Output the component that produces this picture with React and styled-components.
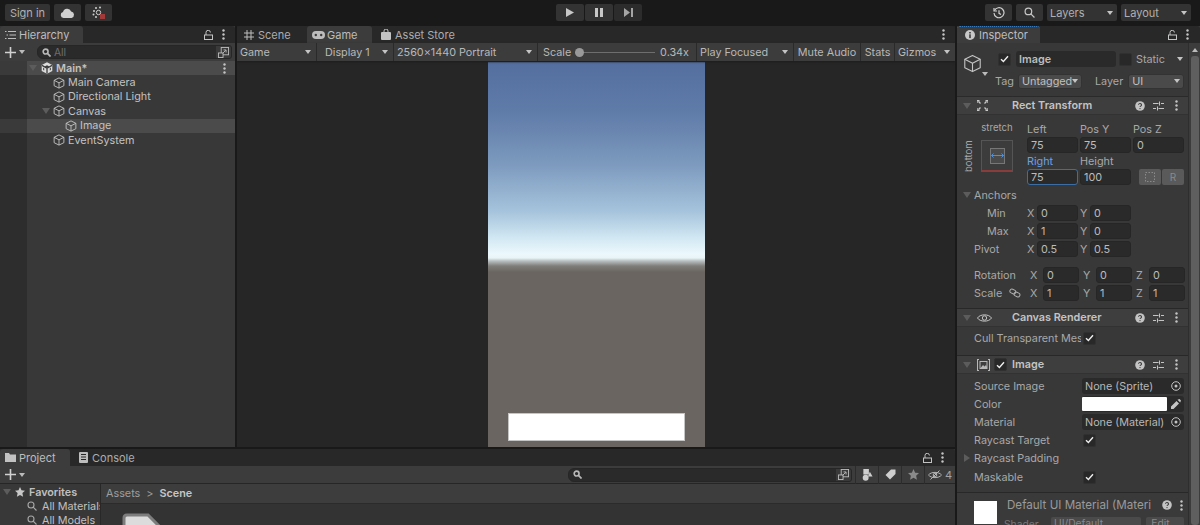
import React from 'react';
import styled, { createGlobalStyle } from 'styled-components';

const Global = createGlobalStyle`
  html, body { margin: 0; padding: 0; background: #191919; }
  body { font-family: Inter, "Noto Sans", "Liberation Sans", sans-serif; font-size: 10.8px; color: #c4c4c4; }
  * { box-sizing: border-box; }
`;

const Page = styled.div`width: 1200px; height: 525px; overflow: hidden; display: flex; flex-direction: column; background: #191919;`;
const TopBar = styled.div`height: 26px; flex: none; display: grid; grid-template-columns: 1fr auto 1fr; align-items: start; padding: 4px 9px 0 5px;`;
const TopGroup = styled.div`display: flex; gap: ${p => p.$gap ?? 4}px; margin-left: ${p => p.$ml ?? 0}px; justify-content: ${p => p.$end ? 'flex-end' : 'flex-start'};`;
const TopButton = styled.div`height: 17px; width: ${p => p.$w}px; background: ${p => p.$dim ? '#2c2c2c' : '#333'}; border-radius: 2px; display: flex; align-items: center; justify-content: center; color: #b0b0b0; font-size: 11px;`;
const TopSelect = styled(TopButton)`justify-content: space-between; padding: 0 4px 0 3px; width: 70px;`;
const Work = styled.div`flex: 1; min-height: 0; display: flex; gap: 2px;`;
const LeftCol = styled.div`width: 955px; flex: none; display: flex; flex-direction: column;`;
const TopPanels = styled.div`height: 421px; flex: none; display: flex; gap: 2px;`;

const Panel = styled.div`display: flex; flex-direction: column; width: ${p => p.$w ? p.$w + 'px' : 'auto'}; flex: ${p => p.$w ? 'none' : 1}; min-width: 0; min-height: 0; overflow: hidden; background: ${p => p.$bg || '#383838'};`;
const TabStrip = styled.div`height: 17px; flex: none; background: #282828; display: flex; align-items: center; border-radius: 3px 3px 0 0;`;
const Tab = styled.div`height: 17px; width: ${p => p.$w}px; flex: none; display: flex; align-items: center; white-space: nowrap; gap: ${p => p.$gap ?? 4}px; padding-left: ${p => p.$pl ?? 5}px; color: ${p => p.$active ? '#bdbdbd' : '#adadad'}; background: ${p => p.$active ? '#3c3c3c' : 'transparent'}; border-radius: 3px 3px 0 0; border-top: ${p => p.$blue ? '1px dotted #3a79bb' : 'none'}; font-size: 11px;`;
const TabTools = styled.div`margin-left: auto; display: flex; align-items: center; gap: ${p => p.$gap ?? 9}px; padding-right: ${p => p.$pr ?? 10}px;`;

const Toolbar = styled.div`height: ${p => p.$h ?? 18}px; flex: none; background: #3c3c3c; display: flex; align-items: center; box-shadow: 0 1px 0 #232323;`;
const AddBox = styled.div`width: 37px; flex: none; display: flex; align-items: center; padding-left: 5px; gap: 3px;`;
const SearchBox = styled.div`height: 14px; width: ${p => p.$w}px; margin-left: ${p => p.$ml ?? 0}px; flex: none; background: #2a2a2a; border-radius: 6px 3px 3px 6px; display: flex; align-items: center; padding-left: 4px; gap: 3px; color: #6e6e6e; font-size: 10.3px; border: 1px solid #262626;`;
const ExpandCell = styled.div`margin-left: auto; width: 15px; height: 12px; flex: none; background: #3a3a3a; border-radius: 0 2px 2px 0; display: flex; align-items: center; justify-content: center;`;

const TreeArea = styled.div`flex: 1; display: flex; flex-direction: column; padding-top: 0; background: linear-gradient(90deg, #2d2d2d 27px, #383838 27px);`;
const TreeRow = styled.div`height: 14.4px; padding-left: ${p => p.$indent}px; display: flex; align-items: center; gap: 3px; background: ${p => p.$bg || 'transparent'}; color: #c2c2c2; font-weight: ${p => p.$bold ? 600 : 400}; font-size: 10.8px;`;
const Spacer = styled.div`margin-left: auto; display: flex; align-items: center; padding-right: ${p => p.$pr ?? 9}px;`;
const TreeArrow = styled.div`width: 0; height: 0; border-left: 4px solid transparent; border-right: 4px solid transparent; border-top: 6px solid #5c5c5c; margin-right: 0;`;

const GameBar = styled(Toolbar)`gap: 0; z-index: 1; box-shadow: 0 1px 2px #1c1c1c;`;
const Seg = styled.div`width: ${p => p.$w}px; flex: none; height: 18px; display: flex; align-items: center; justify-content: ${p => p.$center ? 'center' : 'space-between'}; padding: 0 ${p => p.$pr ?? 5}px 0 ${p => p.$pl ?? 3}px; border-right: ${p => p.$last ? 'none' : '1px solid #2a2a2a'}; color: #b8b8b8; font-size: 10.8px; white-space: nowrap;`;
const Caret = styled.span`display: inline-block; flex: none; width: 0; height: 0; margin-top: ${p => p.$mt ?? 0}px; margin-left: ${p => p.$ml ?? 0}px; border-left: 3.5px solid transparent; border-right: 3.5px solid transparent; border-top: 4px solid ${p => p.$c || '#c4c4c4'};`;
const UpCaret = styled.span`display: block; flex: none; width: 0; height: 0; border-left: 3.5px solid transparent; border-right: 3.5px solid transparent; border-bottom: 4px solid #bbb;`;
const SliderTrack = styled.div`flex: 1; height: 1px; background: #6e6e6e; margin: 0 5px 0 4px; display: flex; align-items: center;`;
const SliderKnob = styled.div`width: 9px; height: 9px; border-radius: 50%; background: #999;`;

const GameView = styled.div`flex: 1; background: #262626; display: flex; justify-content: center; padding-top: 1px;`;
const Viewport = styled.div`width: 217px; height: 385px; padding: 351px 20px 6px; background: linear-gradient(180deg, #546f9f 0px, #5f7ba8 50px, #7b98bd 100px, #a6c4dc 150px, #d5eaf4 178px, #ecf8fc 192px, #e8f4f7 196px, #b8c0c0 199px, #7f7d7a 204px, #6a6560 210px, #6a6560 385px);`;
const WhiteRect = styled.div`height: 28px; background: #fff; border: 1px solid #c5c5c5; width: 177px;`;

const Bottom = styled.div`flex: 1; margin-top: 2px; display: flex; flex-direction: column; min-height: 0; background: #333;`;
const BottomTools = styled(Toolbar)`box-shadow: none; border-bottom: 1px solid #262626; justify-content: flex-start;`;
const ToolBtn = styled.div`width: ${p => p.$w ?? 23}px; flex: none; height: 18px; border-left: 1px solid #2c2c2c; display: flex; align-items: center; justify-content: center; gap: 3px; color: #a5a5a5; font-size: 11px;`;
const BottomBody = styled.div`flex: 1; display: flex; min-height: 0;`;
const FavPane = styled.div`width: 101px; flex: none; background: #383838; border-right: 1px solid #282828; padding-top: 1px; overflow: hidden;`;
const FavRow = styled.div`height: 14px; display: flex; align-items: center; gap: ${p => p.$gap ?? 5}px; padding-left: ${p => p.$pl}px; white-space: nowrap; font-weight: ${p => p.$bold ? 600 : 400}; color: #c0c0c0; font-size: 10.8px;`;
const FilesPane = styled.div`flex: 1; display: flex; flex-direction: column; min-width: 0;`;
const Crumbs = styled.div`height: 20px; flex: none; background: #3d3d3d; border-bottom: 1px solid #2b2b2b; display: flex; align-items: center; padding-left: 5px; gap: 6px; color: #9e9e9e; font-size: 10.8px;`;
const CrumbNow = styled.span`color: #c6c6c6; font-weight: 600;`;
const FileGrid = styled.div`padding: 9px 0 0 20px; overflow: hidden; flex: 1;`;

const Inspector = styled.div`flex: 1; display: flex; flex-direction: column; min-width: 0; background: #383838;`;
const InspBody = styled.div`flex: 1; display: flex; min-height: 0;`;
const InspMain = styled.div`width: 231px; flex: none; min-width: 0; display: flex; flex-direction: column; overflow: hidden;`;
const Scrollbar = styled.div`flex: 1; background: #3c3c3c; border-left: 1px solid #2e2e2e; display: flex; flex-direction: column; align-items: center; padding-top: 5px;`;
const ScrollThumb = styled.div`width: 8px; flex: 1; margin-top: 4px; border-radius: 3px; background: #5f5f5f;`;
const ObjHead = styled.div`height: 54px; flex: none; display: flex; border-bottom: 1px solid #2a2a2a; padding: 8px 0 0 6px;`;
const ObjIcon = styled.div`width: 32px; flex: none; display: flex; align-items: flex-start; padding-top: 3px;`;
const ObjFields = styled.div`flex: 1; display: flex; flex-direction: column; gap: 6px;`;
const ObjLine = styled.div`display: flex; align-items: center; height: 16px; font-size: 10.8px; color: #a8a8a8;`;
const CheckBox = styled.div`width: 13px; height: 13px; flex: none; background: #282828; border: 1px solid #303030; border-radius: 2px; display: flex; align-items: center; justify-content: center; margin: ${p => p.$m || 0};`;
const NameField = styled.div`width: 100px; height: 16px; margin-left: 5px; background: #2a2a2a; border-radius: 3px; padding-left: 3px; display: flex; align-items: center; color: #bdbdbd; font-weight: 600; font-size: 10.8px;`;
const Drop = styled.div`width: ${p => p.$w}px; height: 15px; margin-left: ${p => p.$ml}px; border-radius: 3px; background: #4a4a4a; border: 1px solid #333; display: flex; align-items: center; justify-content: space-between; padding: 0 3px; color: #c0c0c0; font-size: 10.8px;`;
const Txt = styled.span`margin-left: ${p => p.$ml ?? 0}px; width: ${p => p.$w ? p.$w + 'px' : 'auto'}; flex: none; overflow: ${p => p.$clip ? 'hidden' : 'visible'};`;

const CompHead = styled.div`height: 18px; flex: none; background: #3e3e3e; display: flex; align-items: center; padding-left: 6px; font-weight: 600; color: #c4c4c4; font-size: 10.8px; border-bottom: 1px solid #323232;`;
const CompTitle = styled.div`margin-left: ${p => p.$ml}px; flex: 1;`;
const CompTools = styled.div`display: flex; align-items: center; gap: 8px; padding-right: 10px;`;
const KebabGap = styled.div`margin-left: 3px;`;
const CompBody = styled.div`height: ${p => p.$h}px; flex: none; border-bottom: 1px solid #282828; padding-left: 17px; overflow: hidden;`;

const RectBlock = styled.div`display: flex; margin-left: -12px; height: 72px;`;
const AnchorWidget = styled.div`width: 65px; flex: none; display: grid; grid-template-columns: 19px 32px; grid-template-rows: 19px 32px; padding-top: 6px; font-size: 9.6px; color: #a8a8a8;`;
const AnchorTop = styled.div`grid-column: 2; grid-row: 1; text-align: center; line-height: 14px;`;
const AnchorSide = styled.div`grid-column: 1; grid-row: 2; writing-mode: vertical-rl; transform: rotate(180deg); text-align: center; justify-self: start; padding-right: 1px;`;
const AnchorBox = styled.div`grid-column: 2; grid-row: 2; background: #3c3c3c; border: 1px solid #555; border-bottom: 2px solid #8a3b3b; display: flex; align-items: center; justify-content: center;`;
const AnchorInner = styled.div`width: 15px; height: 16px; background: #4a4a4a; border: 1px solid #777; display: flex; align-items: center; justify-content: center;`;
const RectGrid = styled.div`display: grid; grid-template-columns: 53px 53px 51px; grid-template-rows: 15px 17px 15px 18px; width: 157px; padding-top: 7px; font-size: 10.8px; color: #a8a8a8;`;
const RectLabel = styled.div`display: flex; align-items: center; color: ${p => p.$blue ? '#6f9fe0' : 'inherit'}; line-height: 14px;`;
const Field = styled.div`height: 16px; width: ${p => p.$w ?? 51}px; background: #2a2a2a; border: 1px solid ${p => p.$focus ? '#3a6ea5' : '#262626'}; border-radius: 3px; padding-left: 3px; display: flex; align-items: center; color: #bcbcbc; font-size: 10.8px; flex: none;`;
const MiniBtns = styled.div`display: flex; gap: 1px; padding-left: 6px; height: 16px;`;
const MiniBtn = styled.div`width: 22px; height: 16px; background: #5a5a5a; border-radius: 2px; display: flex; align-items: center; justify-content: center; color: #8a8a8a; font-size: 10px;`;
const PropRow = styled.div`height: ${p => p.$h ?? 18}px; margin-top: ${p => p.$mt ?? 0}px; margin-left: ${p => p.$ml ?? 0}px; display: flex; align-items: center; color: #a8a8a8; font-size: 10.8px; white-space: nowrap; flex: none;`;
const AxisCell = styled.div`display: flex; align-items: center; width: ${p => p.$w}px; flex: none;`;
const AxisName = styled.span`width: ${p => p.$w}px; padding-left: ${p => p.$pl ?? 0}px; flex: none;`;
const SideArrow = styled.span`display: inline-block; width: 0; height: 0; margin-right: 4px; border-top: 4px solid transparent; border-bottom: 4px solid transparent; border-left: 6px solid #5c5c5c;`;
const DownArrow = styled.span`display: inline-block; flex: none; width: 0; height: 0; margin-right: ${p => p.$mr ?? 3}px; border-left: 4px solid transparent; border-right: 4px solid transparent; border-top: 6px solid #5c5c5c;`;
const ObjRef = styled.div`width: 102px; height: 16px; background: #2a2a2a; border-radius: 3px; display: flex; align-items: center; justify-content: space-between; padding: 0 3px; color: #b8b8b8; font-size: 10.8px;`;
const ColorField = styled.div`width: 102px; height: 16px; display: flex; align-items: center; background: #2a2a2a; border-radius: 3px; padding-right: 3px; justify-content: space-between;`;
const ColorFill = styled.div`width: 85px; height: 14px; background: #fff; border-radius: 1px;`;
const MatBlock = styled.div`flex: 1; display: flex; padding: 5px 0 0 17px; gap: 10px; background: #3a3a3a; overflow: hidden;`;
const MatSwatch = styled.div`width: 23px; height: 23px; background: #fff; flex: none; margin-top: 3px;`;
const MatCol = styled.div`flex: 1; min-width: 0; display: flex; flex-direction: column; gap: 5px;`;
const MatTitle = styled.div`display: flex; align-items: center; justify-content: space-between; height: 14px; font-size: 11.6px; color: #9a9a9a; white-space: nowrap; padding-right: 5px;`;
const MatTools = styled.div`display: flex; align-items: center; gap: 8px;`;
const ShaderRow = styled.div`display: flex; align-items: center; gap: 5px; margin-left: -3px; color: #777; font-size: 10.3px;`;
const ShaderName = styled.span`width: 42px; flex: none;`;
const ShaderDrop = styled.div`width: 90px; height: 14px; flex: none; background: #4a4a4a; border-radius: 2px; padding-left: 3px; color: #888;`;
const EditBtn = styled.div`width: 38px; height: 14px; flex: none; background: #4a4a4a; border-radius: 2px; text-align: center; color: #888;`;

const Ico = styled.svg`display: block; flex: none;`;

const Cube = ({ s = 12, c = '#c4c4c4', w = 0.9 }) => (
  <Ico width={s} height={s} viewBox="0 0 16 16" fill="none" stroke={c} strokeWidth={w * 16 / s} strokeLinejoin="round">
    <path d="M8 1.2 14.5 4.4v7.2L8 14.8 1.5 11.6V4.4Z" /><path d="M1.5 4.4 8 7.8l6.5-3.4M8 7.8v7" />
  </Ico>
);
const Kebab = ({ c = '#c4c4c4' }) => (
  <Ico width="3" height="11" viewBox="0 0 3 11" fill={c}><circle cx="1.5" cy="1.5" r="1.2" /><circle cx="1.5" cy="5.5" r="1.2" /><circle cx="1.5" cy="9.5" r="1.2" /></Ico>
);
const Lock = () => (
  <Ico width="9" height="10" viewBox="0 0 9 10" fill="none" stroke="#c4c4c4" strokeWidth="1"><rect x=".5" y="5" width="8" height="4.5" /><path d="M2 5V2.5a2.200 2.200 0 0 1 4.400 0" /></Ico>
);
const Check = () => (
  <Ico width="9" height="8" viewBox="0 0 9 8" fill="none" stroke="#eee" strokeWidth="1.4"><path d="M1 4.2 3.4 6.5 8 1.2" /></Ico>
);
const Plus = () => (
  <Ico width="11" height="11" viewBox="0 0 11 11" fill="none" stroke="#d0d0d0" strokeWidth="1.6"><path d="M5.5 0v11M0 5.5h11" /></Ico>
);
const Lens = ({ s = 9, c = '#aaa', w = 1.5 }) => (
  <Ico width={s} height={s} viewBox="0 0 10 10" fill="none" stroke={c} strokeWidth={w}><circle cx="4" cy="4" r="3" /><path d="M6.2 6.2 9.5 9.5" /></Ico>
);
const Expand = () => (
  <Ico width="11" height="11" viewBox="0 0 12 12" fill="none" stroke="#bbb" strokeWidth="1"><rect x="3.5" y="0.5" width="8" height="8" /><rect x="0.5" y="6.5" width="5" height="5" fill="#3a3a3a" /><path d="M5 7l3.5-3.5M6 3.2h2.8V6" /></Ico>
);
const Help = () => (
  <Ico width="10" height="10" viewBox="0 0 10 10"><circle cx="5" cy="5" r="4.8" fill="#c4c4c4" /><path d="M3.5 3.8a1.5 1.4 0 1 1 2.2 1.3c-.5.3-.7.5-.7 1" fill="none" stroke="#3e3e3e" strokeWidth="1.1" /><circle cx="5" cy="7.6" r=".7" fill="#3e3e3e" /></Ico>
);
const Sliders = () => (
  <Ico width="11" height="10" viewBox="0 0 11 10" fill="none" stroke="#c4c4c4" strokeWidth="1"><path d="M0 2.5h5.5M8 2.5h3M0 7.5h3M5.5 7.5H11M6.5 0.5v4M4.5 5.5v4" /></Ico>
);
const CompButtons = () => (
  <CompTools><Help /><Sliders /><KebabGap><Kebab /></KebabGap></CompTools>
);
const Cloud = () => (
  <Ico width="15" height="10" viewBox="0 0 15 10" fill="#d0d0d0"><path d="M3.5 10A3 3 0 0 1 3 4.1 4.3 4.3 0 0 1 11.2 3.4 3.4 3.4 0 0 1 11.6 10Z" /></Ico>
);
const Collab = () => (
  <Ico width="14" height="14" viewBox="0 0 14 14">
    <g fill="#cfcfcf"><circle cx="2" cy="5" r="1" /><circle cx="4" cy="2" r="1" /><circle cx="8" cy="1.5" r="1" /><circle cx="1.5" cy="8.5" r="1" /><circle cx="4" cy="11" r="1" /></g>
    <circle cx="6.5" cy="6.5" r="2.2" fill="none" stroke="#cfcfcf" />
    <rect x="8" y="8" width="5" height="5" fill="#a33a3a" />
  </Ico>
);
const PlayIco = () => <Ico width="8" height="9" viewBox="0 0 8 9" fill="#c8c8c8"><path d="M0 0 8 4.5 0 9Z" /></Ico>;
const PauseIco = () => <Ico width="8" height="9" viewBox="0 0 8 9" fill="#c8c8c8"><path d="M0 0h3v9H0zM5 0h3v9H5z" /></Ico>;
const StepIco = () => <Ico width="9" height="9" viewBox="0 0 9 9" fill="#a5a5a5"><path d="M0 0 6 4.5 0 9ZM7 0h2v9H7z" /></Ico>;
const History = () => (
  <Ico width="12" height="12" viewBox="0 0 12 12" fill="none" stroke="#d0d0d0" strokeWidth="1.2"><path d="M1.5 3.5A5 5 0 1 1 1 6" /><path d="M1 1v3h3" /><path d="M6 3.2V6.3l2 1.2" /></Ico>
);
const UnityLogo = () => (
  <Ico width="12" height="12" viewBox="0 0 12 12">
    <path d="M6 .2 11.300 3v6L6 11.800.7 9V3Z" fill="#dcdcdc" />
    <path d="M6 6.200V11.500M6 6.200 1 3.400M6 6.200l5-2.800" stroke="#3a3a3a" strokeWidth="1.300" />
    <path d="M6 3.300 8.300 4.600 6 6 3.700 4.600ZM3.200 6.200v2.400l-1-.6V5.600ZM8.800 6.200v2.400l1-.6V5.600Z" fill="#3a3a3a" />
  </Ico>
);
const Hash = () => (
  <Ico width="10" height="10" viewBox="0 0 10 10" fill="none" stroke="#bdbdbd" strokeWidth="1"><path d="M3 0v10M7 0v10M0 3h10M0 7h10" /></Ico>
);
const Gamepad = () => (
  <Ico width="13" height="8" viewBox="0 0 13 8"><rect width="13" height="8" rx="4" fill="#bdbdbd" /><circle cx="3.8" cy="4" r="1.2" fill="#3c3c3c" /><circle cx="9.2" cy="4" r="1.2" fill="#3c3c3c" /></Ico>
);
const Bag = () => (
  <Ico width="10" height="11" viewBox="0 0 10 11"><rect y="3" width="10" height="8" rx="1" fill="#c2c2c2" /><path d="M3 4V2a2 2 0 0 1 4 0v2" fill="none" stroke="#c2c2c2" /></Ico>
);
const ListIco = () => (
  <Ico width="11" height="8" viewBox="0 0 11 8" fill="none" stroke="#bdbdbd"><path d="M3 .5h8M4.5 4H11M3 7.5h8" /><path d="M0 .5h1.5M1.5 4H3M0 7.5h1.5" /></Ico>
);
const InfoIco = () => (
  <Ico width="10" height="10" viewBox="0 0 10 10"><circle cx="5" cy="5" r="5" fill="#c8c8c8" /><rect x="4.2" y="4.3" width="1.6" height="3.8" fill="#3c3c3c" /><rect x="4.2" y="2" width="1.6" height="1.5" fill="#3c3c3c" /></Ico>
);
const FolderIco = () => (
  <Ico width="11" height="9" viewBox="0 0 11 9" fill="#c2c2c2"><path d="M0 0h4l1 1.5h6V9H0Z" /></Ico>
);
const ConsoleIco = () => (
  <Ico width="9" height="11" viewBox="0 0 9 11"><rect width="9" height="11" rx="1" fill="#bdbdbd" /><path d="M2 2.5h5M2 5h5M2 7.5h5" stroke="#282828" /></Ico>
);
const Star = ({ c = '#c8c8c8', s = 10 }) => (
  <Ico width={s} height={s} viewBox="0 0 10 10" fill={c}><path d="M5 0 6.5 3.3 10 3.7 7.4 6.1 8.1 9.7 5 7.9 1.9 9.7 2.6 6.1 0 3.7 3.5 3.3Z" /></Ico>
);
const Shapes = () => (
  <Ico width="11" height="12" viewBox="0 0 11 13" fill="#cfcfcf"><rect x="1" y="0" width="6" height="6" /><circle cx="3.5" cy="9.5" r="3.2" /><path d="M8 3 11 8H6Z" /></Ico>
);
const TagIco = () => (
  <Ico width="11" height="11" viewBox="0 0 11 11" fill="#cfcfcf"><path d="M6 .5h4.5V5L5 10.5.5 6Z" /></Ico>
);
const EyeOff = () => (
  <Ico width="14" height="10" viewBox="0 0 14 10" fill="none" stroke="#b5b5b5" strokeWidth="1"><path d="M.5 5C3 1.5 11 1.5 13.5 5 11 8.5 3 8.5.5 5Z" /><circle cx="7" cy="5" r="1.8" /><path d="M2.5 9.5 11.5.5" /></Ico>
);
const Eye = () => (
  <Ico width="15" height="10" viewBox="0 0 15 10" fill="none" stroke="#c4c4c4" strokeWidth="1"><path d="M.5 5C3 .8 12 .8 14.5 5 12 9.2 3 9.2.5 5Z" /><circle cx="7.5" cy="5" r="2.2" /></Ico>
);
const RectIco = () => (
  <Ico width="11" height="11" viewBox="0 0 11 11" fill="none" stroke="#c8c8c8" strokeWidth="1.3"><path d="M0 3V.6h2.500M8.500.6H11V3M0 8v2.400h2.500M8.500 10.400H11V8M3.500 3.500 1.500 1.500M7.500 3.500l2-2M3.500 7.500l-2 2M7.500 7.500l2 2" /></Ico>
);
const ImgIco = () => (
  <Ico width="13" height="12" viewBox="0 0 13 12" fill="none" stroke="#b8b8b8"><path d="M0 .5h2M11 .5h2M0 11.500h2M11 11.500h2M.5 0v12M12.500 0v12" /><rect x="3" y="2.500" width="7" height="7" /><path d="M3.500 9 6 6l1.500 1.500L9 6l1 2v1.500H3.500Z" fill="#b8b8b8" stroke="none" /></Ico>
);
const Chain = () => (
  <Ico width="12" height="10" viewBox="0 0 12 10" fill="none" stroke="#b0b0b0"><rect x=".8" y="1.500" width="6" height="4" rx="2" transform="rotate(25 3.800 3.500)" /><rect x="5" y="4.500" width="6" height="4" rx="2" transform="rotate(25 8 6.500)" /></Ico>
);
const Target = () => (
  <Ico width="10" height="10" viewBox="0 0 10 10" fill="none" stroke="#c4c4c4"><circle cx="5" cy="5" r="4.300" /><circle cx="5" cy="5" r="1.500" fill="#c4c4c4" stroke="none" /></Ico>
);
const Picker = () => (
  <Ico width="10" height="10" viewBox="0 0 10 10" fill="#c4c4c4"><path d="M5.500 2 8 4.500 2.500 10 0 10 0 7.500ZM6.500.8 9.200 3.500 10 1.500 8.500 0Z" /></Ico>
);
const SmallLens = () => (
  <Ico width="9" height="9" viewBox="0 0 10 10" fill="none" stroke="#b8b8b8" strokeWidth="1.8"><circle cx="4" cy="4" r="2.700" /><path d="M6 6 9.500 9.500" /></Ico>
);
const StretchMark = () => (
  <Ico width="13" height="5" viewBox="0 0 13 5" fill="none" stroke="#4f8fd8"><path d="M.5 2.500h12M2.500.5.500 2.500l2 2M10.500.5l2 2-2 2" /></Ico>
);
const DotRect = () => (
  <Ico width="10" height="10" viewBox="0 0 10 10" fill="none" stroke="#8a8a8a" strokeDasharray="1.500 1.500"><rect x=".5" y=".5" width="9" height="9" /></Ico>
);
const BigFolder = () => (
  <Ico width="48" height="30" viewBox="0 0 48 30"><path d="M3 30V5q0-3 3-3h21l11 11v17Z" fill="#dcdcdc" stroke="#7d7d7d" strokeWidth="3" /></Ico>
);

const ROW_SELECTED = 'linear-gradient(90deg, #3a3a3a 27px, #4b4b4b 27px)';

const TreeItem = ({ indent, label, bg, arrow }) => (
  <TreeRow $indent={indent} $bg={bg}>
    {arrow && <TreeArrow />}
    <Cube s={12} />
    <span>{label}</span>
  </TreeRow>
);

const VecPair = ({ name, x, y, pl }) => (
  <PropRow>
    <AxisName $w={53} $pl={pl}>{name}</AxisName>
    <AxisCell $w={53}><AxisName $w={10}>X</AxisName><Field $w={41}>{x}</Field></AxisCell>
    <AxisCell $w={53}><AxisName $w={10}>Y</AxisName><Field $w={41}>{y}</Field></AxisCell>
  </PropRow>
);

const TitleWithIcon = styled.span`display: flex; align-items: center; justify-content: space-between; width: 47px;`;

const Vec3 = ({ name, x, y, z, icon }) => (
  <PropRow>
    <AxisName $w={56}><TitleWithIcon>{name}{icon}</TitleWithIcon></AxisName>
    <AxisCell $w={53}><AxisName $w={13}>X</AxisName><Field $w={36}>{x}</Field></AxisCell>
    <AxisCell $w={53}><AxisName $w={13}>Y</AxisName><Field $w={36}>{y}</Field></AxisCell>
    <AxisCell $w={53}><AxisName $w={13}>Z</AxisName><Field $w={36}>{z}</Field></AxisCell>
  </PropRow>
);

export default function App() {
  return (
    <Page>
      <Global />
      <TopBar>
        <TopGroup>
          <TopButton $w={45}>Sign in</TopButton>
          <TopButton $w={27}><Cloud /></TopButton>
          <TopButton $w={27}><Collab /></TopButton>
        </TopGroup>
        <TopGroup $gap={1} $ml={2}>
          <TopButton $w={28}><PlayIco /></TopButton>
          <TopButton $w={28}><PauseIco /></TopButton>
          <TopButton $w={28} $dim><StepIco /></TopButton>
        </TopGroup>
        <TopGroup $end>
          <TopButton $w={27}><History /></TopButton>
          <TopButton $w={27}><Lens s={11} c="#c8c8c8" w={1.1} /></TopButton>
          <TopSelect>Layers<Caret /></TopSelect>
          <TopSelect>Layout<Caret /></TopSelect>
        </TopGroup>
      </TopBar>
      <Work>
        <LeftCol>
          <TopPanels>
            <Panel $w={235}>
              <TabStrip>
                <Tab $w={83} $active $gap={3}><ListIco />Hierarchy</Tab>
                <TabTools><Lock /><Kebab /></TabTools>
              </TabStrip>
              <Toolbar>
                <AddBox><Plus /><Caret $c="#bbb" /></AddBox>
                <SearchBox $w={195}><SmallLens /><span>All</span><ExpandCell><Expand /></ExpandCell></SearchBox>
              </Toolbar>
              <TreeArea>
                <TreeRow $indent={29} $bg={ROW_SELECTED} $bold>
                  <DownArrow $mr={1} />
                  <UnityLogo />
                  <span>Main*</span>
                  <Spacer><Kebab /></Spacer>
                </TreeRow>
                <TreeItem indent={53} label="Main Camera" />
                <TreeItem indent={53} label="Directional Light" />
                <TreeItem indent={42} arrow label="Canvas" />
                <TreeItem indent={65} label="Image" bg={ROW_SELECTED} />
                <TreeItem indent={53} label="EventSystem" />
              </TreeArea>
            </Panel>
            <Panel $bg="#262626">
              <TabStrip>
                <Tab $w={70} $pl={7} $gap={4}><Hash />Scene</Tab>
                <Tab $w={65} $active $pl={5} $gap={2}><Gamepad />Game</Tab>
                <Tab $w={90} $pl={9} $gap={4}><Bag />Asset Store</Tab>
                <TabTools $pr={10}><Kebab /></TabTools>
              </TabStrip>
              <GameBar>
                <Seg $w={80}>Game<Caret /></Seg>
                <Seg $w={77} $pl={8}>Display 1<Caret /></Seg>
                <Seg $w={144}>2560x1440 Portrait<Caret /></Seg>
                <Seg $w={159} $pl={5} $pr={7}>Scale<SliderTrack><SliderKnob /></SliderTrack>0.34x</Seg>
                <Seg $w={97}>Play Focused<Caret /></Seg>
                <Seg $w={67} $center $pl={0} $pr={0}>Mute Audio</Seg>
                <Seg $w={34} $center $pl={0} $pr={0}>Stats</Seg>
                <Seg $w={60} $pr={5} $last>Gizmos<Caret /></Seg>
              </GameBar>
              <GameView>
                <Viewport><WhiteRect /></Viewport>
              </GameView>
            </Panel>
          </TopPanels>
          <Bottom>
            <TabStrip>
              <Tab $w={70} $active $gap={3}><FolderIco />Project</Tab>
              <Tab $w={70} $pl={9} $gap={4}><ConsoleIco />Console</Tab>
              <TabTools $pr={11}><Lock /><Kebab /></TabTools>
            </TabStrip>
            <BottomTools>
              <AddBox><Plus /><Caret $c="#bbb" /></AddBox>
              <SearchBox $w={284} $ml={531}><SmallLens /><ExpandCell><Expand /></ExpandCell></SearchBox>
              <Spacer $pr={3} />
              <ToolBtn $w={23}><Shapes /></ToolBtn>
              <ToolBtn $w={23}><TagIco /></ToolBtn>
              <ToolBtn $w={23}><Star c="#8a8a8a" s={11} /></ToolBtn>
              <ToolBtn $w={31}><EyeOff />4</ToolBtn>
            </BottomTools>
            <BottomBody>
              <FavPane>
                <FavRow $pl={3} $bold $gap={4}><DownArrow $mr={0} /><Star />Favorites</FavRow>
                <FavRow $pl={27}><Lens s={10} c="#a8a8a8" w={1.1} />All Materials</FavRow>
                <FavRow $pl={27}><Lens s={10} c="#a8a8a8" w={1.1} />All Models</FavRow>
              </FavPane>
              <FilesPane>
                <Crumbs>Assets <span>&gt;</span> <CrumbNow>Scene</CrumbNow></Crumbs>
                <FileGrid><BigFolder /></FileGrid>
              </FilesPane>
            </BottomBody>
          </Bottom>
        </LeftCol>
        <Inspector>
          <TabStrip>
            <Tab $w={83} $active $blue $pl={8} $gap={4}><InfoIco />Inspector</Tab>
            <TabTools $pr={11}><Lock /><Kebab /></TabTools>
          </TabStrip>
          <InspBody>
            <InspMain>
              <ObjHead>
                <ObjIcon><Cube s={19} w={1.1} /><Caret $c="#bbb" $mt={18} /></ObjIcon>
                <ObjFields>
                  <ObjLine>
                    <CheckBox $m="0 0 0 3px"><Check /></CheckBox>
                    <NameField>Image</NameField>
                    <CheckBox $m="0 0 0 3px" />
                    <Txt $ml={4}>Static</Txt>
                    <Caret $ml={12} />
                  </ObjLine>
                  <ObjLine>
                    <Txt $w={19}>Tag</Txt>
                    <Drop $w={64} $ml={4}>Untagged<Caret /></Drop>
                    <Txt $ml={13}>Layer</Txt>
                    <Drop $w={56} $ml={5}>UI<Caret /></Drop>
                  </ObjLine>
                </ObjFields>
              </ObjHead>
              <CompHead>
                <DownArrow $mr={6} />
                <RectIco />
                <CompTitle $ml={24}>Rect Transform</CompTitle>
                <CompButtons />
              </CompHead>
              <CompBody $h={194}>
                <RectBlock>
                  <AnchorWidget>
                    <AnchorTop>stretch</AnchorTop>
                    <AnchorSide>bottom</AnchorSide>
                    <AnchorBox><AnchorInner><StretchMark /></AnchorInner></AnchorBox>
                  </AnchorWidget>
                  <RectGrid>
                    <RectLabel>Left</RectLabel><RectLabel>Pos Y</RectLabel><RectLabel>Pos Z</RectLabel>
                    <Field>75</Field><Field>75</Field><Field>0</Field>
                    <RectLabel $blue>Right</RectLabel><RectLabel>Height</RectLabel><span />
                    <Field $focus>75</Field><Field>100</Field>
                    <MiniBtns><MiniBtn><DotRect /></MiniBtn><MiniBtn>R</MiniBtn></MiniBtns>
                  </RectGrid>
                </RectBlock>
                <PropRow $mt={-1} $ml={-11}><DownArrow />Anchors</PropRow>
                <VecPair name="Min" x="0" y="0" pl={13} />
                <VecPair name="Max" x="1" y="0" pl={13} />
                <VecPair name="Pivot" x="0.5" y="0.5" />
                <PropRow $h={8} />
                <Vec3 name="Rotation" x="0" y="0" z="0" />
                <Vec3 name="Scale" x="1" y="1" z="1" icon={<Chain />} />
              </CompBody>
              <CompHead>
                <DownArrow $mr={6} />
                <Eye />
                <CompTitle $ml={20}>Canvas Renderer</CompTitle>
                <CompButtons />
              </CompHead>
              <CompBody $h={29}>
                <PropRow $mt={2}><Txt $w={107} $clip>Cull Transparent Mesh</Txt><CheckBox $m="0 0 0 2px"><Check /></CheckBox></PropRow>
              </CompBody>
              <CompHead>
                <DownArrow $mr={6} />
                <ImgIco />
                <CheckBox $m="0 0 0 4px"><Check /></CheckBox>
                <CompTitle $ml={5}>Image</CompTitle>
                <CompButtons />
              </CompHead>
              <CompBody $h={119}>
                <PropRow $mt={3}><Txt $w={108}>Source Image</Txt><ObjRef>None (Sprite)<Target /></ObjRef></PropRow>
                <PropRow><Txt $w={108}>Color</Txt><ColorField><ColorFill /><Picker /></ColorField></PropRow>
                <PropRow><Txt $w={108}>Material</Txt><ObjRef>None (Material)<Target /></ObjRef></PropRow>
                <PropRow><Txt $w={108}>Raycast Target</Txt><CheckBox $m="0 0 0 1px"><Check /></CheckBox></PropRow>
                <PropRow $ml={-10}><SideArrow />Raycast Padding</PropRow>
                <PropRow $mt={1}><Txt $w={108}>Maskable</Txt><CheckBox $m="0 0 0 1px"><Check /></CheckBox></PropRow>
              </CompBody>
              <MatBlock>
                <MatSwatch />
                <MatCol>
                  <MatTitle><span>Default UI Material (Materi</span><MatTools><Help /><Kebab /></MatTools></MatTitle>
                  <ShaderRow><ShaderName>Shader</ShaderName><ShaderDrop>UI/Default</ShaderDrop><EditBtn>Edit...</EditBtn></ShaderRow>
                </MatCol>
              </MatBlock>
            </InspMain>
            <Scrollbar>
              <UpCaret />
              <ScrollThumb />
            </Scrollbar>
          </InspBody>
        </Inspector>
      </Work>
    </Page>
  );
}
